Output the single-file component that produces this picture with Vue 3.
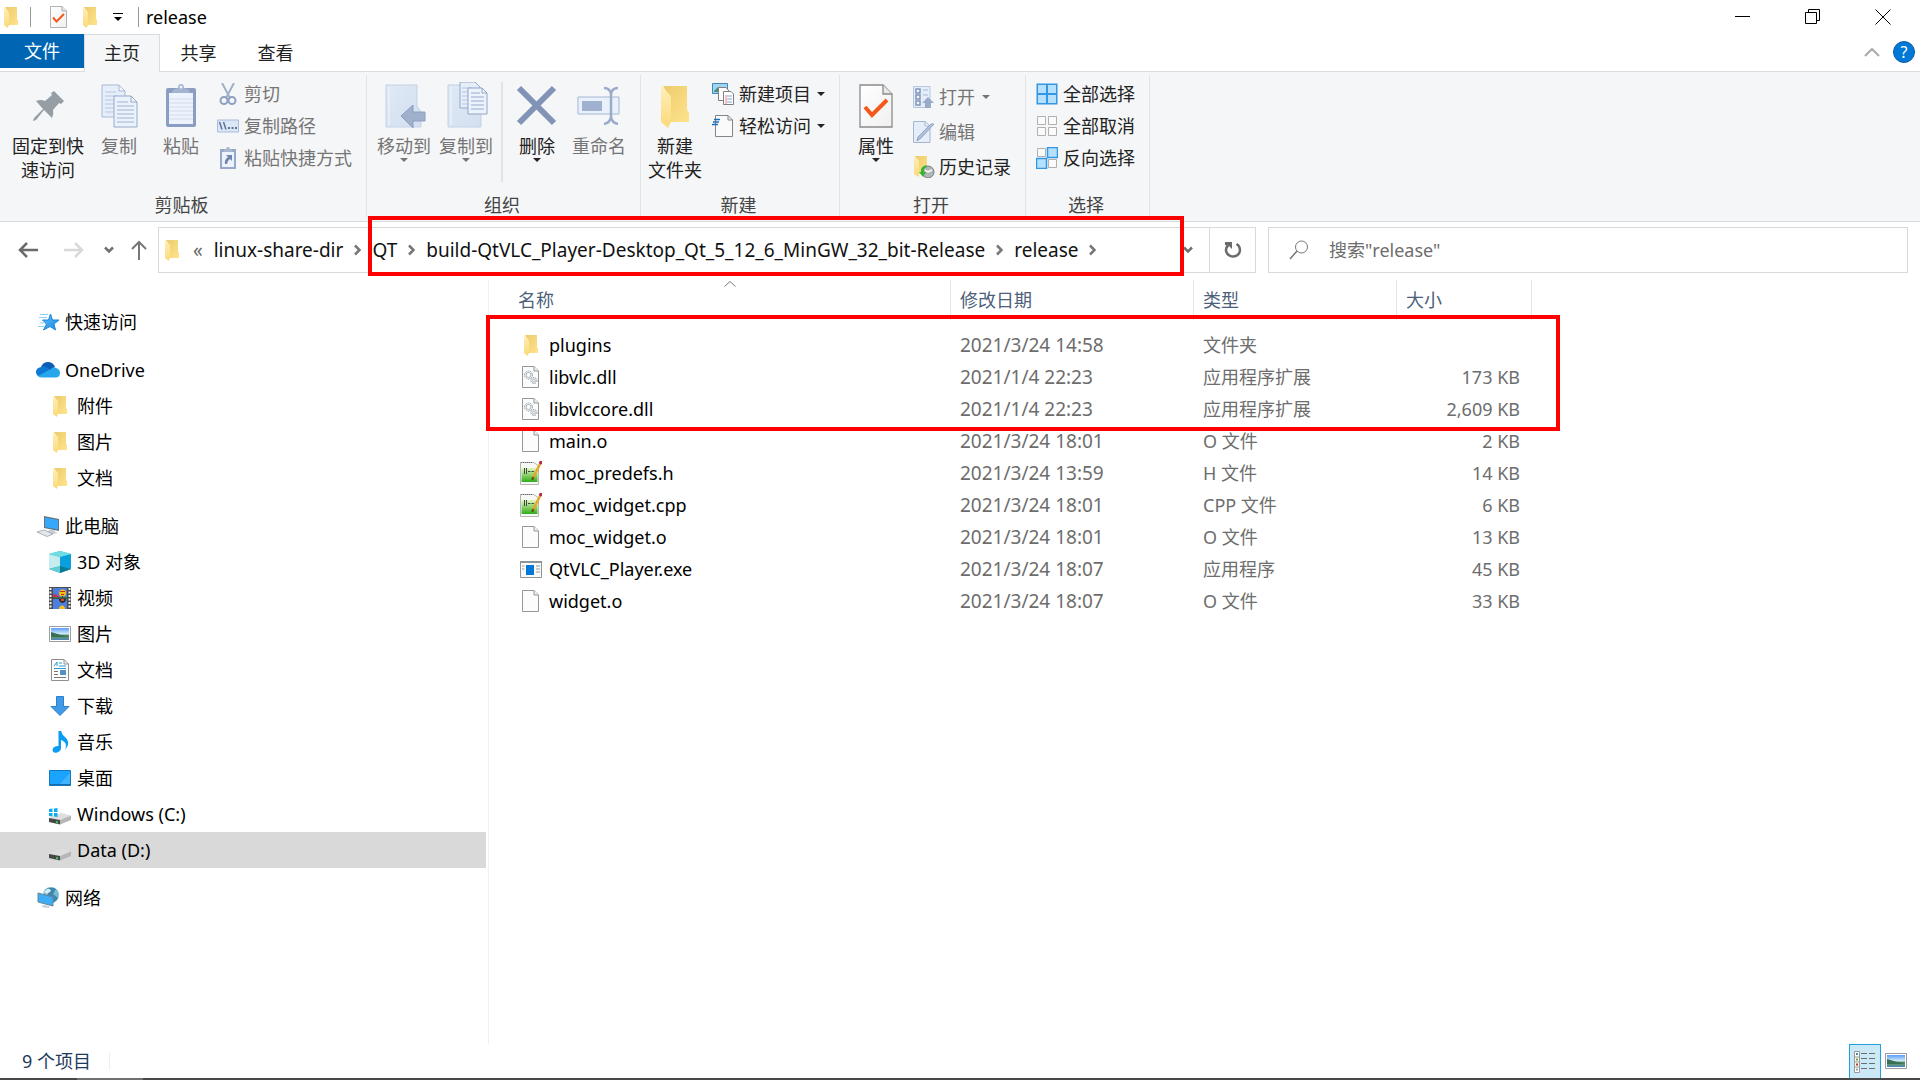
<script setup>
import { ref } from 'vue'

const tabs = ['主页', '共享', '查看']
const activeTab = ref('主页')

const clipboardSmall = [
  { icon: 'cut', text: '剪切' },
  { icon: 'copypath', text: '复制路径' },
  { icon: 'shortcut', text: '粘贴快捷方式' },
]
const selectSmall = [
  { icon: 'selall', text: '全部选择' },
  { icon: 'selnone', text: '全部取消' },
  { icon: 'selinv', text: '反向选择' },
]

const tree = [
  [{ icon: 'star', text: '快速访问' }],
  [
    { icon: 'cloud', text: 'OneDrive' },
    { icon: 'folder', text: '附件', child: true },
    { icon: 'folder', text: '图片', child: true },
    { icon: 'folder', text: '文档', child: true },
  ],
  [
    { icon: 'pc', text: '此电脑' },
    { icon: 'cube', text: '3D 对象', child: true },
    { icon: 'video', text: '视频', child: true },
    { icon: 'picture', text: '图片', child: true },
    { icon: 'doc', text: '文档', child: true },
    { icon: 'download', text: '下载', child: true },
    { icon: 'music', text: '音乐', child: true },
    { icon: 'desktop', text: '桌面', child: true },
    { icon: 'windrive', text: 'Windows (C:)', child: true },
    { icon: 'drive', text: 'Data (D:)', child: true, selected: true },
  ],
  [{ icon: 'network', text: '网络' }],
]

const crumbs = ['linux-share-dir', 'QT', 'build-QtVLC_Player-Desktop_Qt_5_12_6_MinGW_32_bit-Release', 'release']

const files = [
  { icon: 'folder', name: 'plugins', date: '2021/3/24 14:58', type: '文件夹', size: '' },
  { icon: 'dll', name: 'libvlc.dll', date: '2021/1/4 22:23', type: '应用程序扩展', size: '173 KB' },
  { icon: 'dll', name: 'libvlccore.dll', date: '2021/1/4 22:23', type: '应用程序扩展', size: '2,609 KB' },
  { icon: 'blank', name: 'main.o', date: '2021/3/24 18:01', type: 'O 文件', size: '2 KB' },
  { icon: 'npp', name: 'moc_predefs.h', date: '2021/3/24 13:59', type: 'H 文件', size: '14 KB' },
  { icon: 'npp', name: 'moc_widget.cpp', date: '2021/3/24 18:01', type: 'CPP 文件', size: '6 KB' },
  { icon: 'blank', name: 'moc_widget.o', date: '2021/3/24 18:01', type: 'O 文件', size: '13 KB' },
  { icon: 'exe', name: 'QtVLC_Player.exe', date: '2021/3/24 18:07', type: '应用程序', size: '45 KB' },
  { icon: 'blank', name: 'widget.o', date: '2021/3/24 18:07', type: 'O 文件', size: '33 KB' },
]
</script>

<template>
  <div class="window">
    <svg class="defs" aria-hidden="true">
      <defs>
        <linearGradient id="gFold" x1="0" y1="0" x2="1" y2="1"><stop offset="0" stop-color="#eccb6c" /><stop offset="1" stop-color="#ffe38c" /></linearGradient>
        <linearGradient id="gLeaf" x1="0" y1="0" x2="0" y2="1"><stop offset="0" stop-color="#ffefb8" /><stop offset="1" stop-color="#fbd978" /></linearGradient>
        <linearGradient id="gPale" x1="0" y1="0" x2="1" y2="1"><stop offset="0" stop-color="#dfe9f6" /><stop offset="1" stop-color="#d3dff0" /></linearGradient>
        <linearGradient id="gPage" x1="0" y1="0" x2="1" y2="1"><stop offset="0" stop-color="#ffffff" /><stop offset="1" stop-color="#f0f0f0" /></linearGradient>
        <linearGradient id="gBlue" x1="0" y1="0" x2="1" y2="1"><stop offset="0" stop-color="#5fc0ff" /><stop offset="1" stop-color="#1488e0" /></linearGradient>
        <linearGradient id="gGreen" x1="0" y1="0" x2="0" y2="1"><stop offset="0" stop-color="#e4f5c4" /><stop offset="1" stop-color="#2fae18" /></linearGradient>
        <linearGradient id="gSky" x1="0" y1="0" x2="0" y2="1"><stop offset="0" stop-color="#5a9df5" /><stop offset=".5" stop-color="#d5ecf8" /><stop offset=".6" stop-color="#4f8560" /><stop offset=".8" stop-color="#5f9478" /><stop offset="1" stop-color="#4c83c8" /></linearGradient>
      </defs>
      <symbol id="folder" viewBox="0 0 14 21">
        <path d="M1 0H13V12L14 13V18H4V5z" fill="url(#gFold)" />
        <path d="M0 0L4 4Q5 5 5 6V18L3.500 21L0 18z" fill="url(#gLeaf)" />
      </symbol>
      <symbol id="props" viewBox="0 0 34 44">
        <path d="M1 1H24L33 10V43H1z" fill="url(#gPage)" stroke="#8b8b8b" stroke-width="1.300" />
        <path d="M24 1V10H33" fill="#e8e8e8" stroke="#8b8b8b" stroke-width="1.300" />
        <path d="M6 23L13 31L28 16" fill="none" stroke="#f4581a" stroke-width="4" />
      </symbol>
      <symbol id="pin" viewBox="0 0 48 48">
        <path d="M30 9L40 19L37 22L35 21L29 28Q30 32 28 36L20 28L12 38L9 39L10 36L19 27L12 19Q17 17 21 19L28 13L27 11z" fill="#949ea4" />
      </symbol>
      <symbol id="copy" viewBox="0 0 48 48">
        <path d="M7 3H24L30 9V35H7zM24 3V9H30" fill="#e6eefa" stroke="#a7b9d6" />
        <path d="M10 10H21M10 14H22M10 18H20M10 22H20M10 26H20M10 30H18" stroke="#b9c8df" />
        <path d="M19 14H36L42 20V45H19zM36 14V20H42" fill="#ecf2fc" stroke="#94a8ca" />
        <path d="M22 20H33M22 24H39M22 28H39M22 32H39M22 36H39M22 40H39" stroke="#9fb1cf" />
      </symbol>
      <symbol id="paste" viewBox="0 0 48 48">
        <rect x="9" y="6" width="30" height="39" rx="2" fill="#8b9dc1" />
        <path d="M12 11H36V42H12z" fill="#edf3fc" />
        <path d="M12 17H36M12 21H36M12 25H36M12 29H36M12 33H36M12 37H36" stroke="#d0dcec" />
        <path d="M15 11Q15 7 21 6Q21 2 24 2T27 6Q33 7 33 11z" fill="#a4b3cf" />
        <circle cx="24" cy="5" r="1.500" fill="#edf3fc" />
      </symbol>
      <symbol id="moveto" viewBox="0 0 48 48">
        <path d="M6 3H37V24L41 30V45H6z" fill="url(#gPale)" stroke="#c3d2e8" /><path d="M9 5V43" stroke="#f1f5fb" />
        <path d="M21 34L33 23V30H45V39H33V46z" fill="#9fb0cd" stroke="#8d9fc0" />
      </symbol>
      <symbol id="copyto" viewBox="0 0 48 48">
        <path d="M6 3H35V28L39 33V45H6z" fill="url(#gPale)" stroke="#c3d2e8" /><path d="M9 5V43" stroke="#f1f5fb" />
        <path d="M18 0H33L38 5V26H18z" fill="#e6eefa" stroke="#94a8ca" /><path d="M20 6H30M20 10H28M20 14H26M20 18H26M20 22H26" stroke="#b5c4dc" />
        <path d="M26 6H40L45 11V32H26zM40 6V11H45" fill="#edf3fc" stroke="#8fa3c6" /><path d="M29 11H38M29 15H42M29 19H42M29 23H42M29 27H42" stroke="#94a8ca" />
      </symbol>
      <symbol id="del" viewBox="0 0 48 48"><path d="M6 6L41 41M41 6L6 41" stroke="#8194b7" stroke-width="6" /></symbol>
      <symbol id="rename" viewBox="0 0 48 48">
        <path d="M3 15H44V32H3z" fill="#e9f1fd" stroke="#a5b6d3" /><path d="M7 19H27V29H7z" fill="#a0b1cf" />
        <path d="M29 6Q35 6 36 12V35Q35 41 29 42M43 6Q37 6 36 12M36 35Q37 41 43 42" fill="none" stroke="#9aabc9" stroke-width="2.500" />
      </symbol>
      <symbol id="cut" viewBox="0 0 22 22">
        <path d="M5 0L13 15M17 0L9 15" stroke="#a2b0c9" stroke-width="2" />
        <circle cx="7" cy="17.500" r="3.500" fill="none" stroke="#8ea0c2" stroke-width="2" /><circle cx="15" cy="17.500" r="3.500" fill="none" stroke="#8ea0c2" stroke-width="2" />
      </symbol>
      <symbol id="copypath" viewBox="0 0 22 22">
        <path d="M.5 5H21.500V17H.5z" fill="#dbe7f7" stroke="#a9bcd9" />
        <path d="M2.500 7L5 14.500M6.500 7L9 14.500" stroke="#5f7396" stroke-width="1.500" /><path d="M11 13H13M14.500 13H16.500M18 13H20" stroke="#5f7396" stroke-width="2" />
      </symbol>
      <symbol id="shortcut" viewBox="0 0 22 22">
        <path d="M3 2H19V22H3z" fill="#96a9ca" /><path d="M5 5H17V20H5z" fill="#edf3fc" />
        <path d="M6 5Q7 2 9 2Q9 0 11 0T13 2Q15 2 16 5z" fill="#a9b7d1" />
        <path d="M9 8H15V14L13 12Q10 14 10 17H8Q7 13 11 10z" fill="#7186ad" />
      </symbol>
      <symbol id="newitem" viewBox="0 0 22 22">
        <path d="M.5 .5H15.500V10.500H.5z" fill="#9fd5f1" stroke="#3f88b4" /><path d="M2 8L6 4L9 9H2z" fill="#4a8f80" />
        <path d="M6.500 4.500H14L17 8V17.500H6.500z" fill="#fff" stroke="#808080" />
        <path d="M11.500 8.500H19L21.500 11V21.500H11.500z" fill="#fff" stroke="#808080" /><path d="M14 12V21" stroke="#f08080" /><path d="M15 13H20M15 16H20M15 19H20" stroke="#7aa5dc" />
      </symbol>
      <symbol id="easy" viewBox="0 0 22 22">
        <path d="M3.500 .5H16L20.500 5V21.500H3.500zM16 .5V5H20.500" fill="#fafafa" stroke="#858585" />
        <path d="M2 4.500H8M1 7H7M0 9.500H6" stroke="#1c6fb9" stroke-width="1.500" />
      </symbol>
      <symbol id="open" viewBox="0 0 22 22">
        <path d="M.5 .5H17V21.500H.5z" fill="#e4edf9" stroke="#b7c6de" />
        <path d="M3 3H7V7H3zM3 9H7V13H3zM3 15H7V19H3z" fill="#f2f7fe" stroke="#8195ba" stroke-width="1.500" /><path d="M10 4H15M10 9H15" stroke="#a8b8d3" />
        <path d="M15 11L21 17H18V22H12V17H9z" fill="#9aabca" />
      </symbol>
      <symbol id="edit" viewBox="0 0 22 22">
        <path d="M.5 .5H12L17 5V21.500H.5zM12 .5V5H17" fill="#e4edf9" stroke="#a5b6d2" /><path d="M21 3L8 17L4 20L5 16L18 3z" fill="#b4c2da" stroke="#8fa2c4" />
      </symbol>
      <symbol id="history" viewBox="0 0 22 22">
        <path d="M2 0H14V12L15 18H5V5z" fill="url(#gFold)" /><path d="M1 0L6 5V21L1 18z" fill="url(#gLeaf)" />
        <circle cx="15" cy="16" r="6" fill="#b0b5b7" stroke="#777d7f" /><path d="M12 14L15 16L19 14" fill="none" stroke="#fff" stroke-width="1.500" />
        <path d="M13 9Q7 11 8 16L6 16L10 21L13 16H11Q10 12 14 11z" fill="#35b52e" />
      </symbol>
      <symbol id="selall" viewBox="0 0 22 22">
        <path d="M.5 .5H21.500V21.500H.5z" fill="#3397e2" /><path d="M2 2H10V10H2zM12 2H20V10H12zM2 12H10V20H2zM12 12H20V20H12z" fill="#b5e0ff" />
      </symbol>
      <symbol id="selnone" viewBox="0 0 22 22"><path d="M1.500 1.500H9.500V9.500H1.500zM12.500 1.500H20.500V9.500H12.500zM1.500 12.500H9.500V20.500H1.500zM12.500 12.500H20.500V20.500H12.500z" fill="#fbfbfb" stroke="#b0b0b0" /></symbol>
      <symbol id="selinv" viewBox="0 0 22 22">
        <path d="M1.500 1.500H9.500V9.500H1.500zM12.500 12.500H20.500V20.500H12.500z" fill="#fbfbfb" stroke="#b0b0b0" /><path d="M11.500 .5H21.500V10.500H11.500zM.5 11.500H10.500V21.500H.5z" fill="#b5e0ff" stroke="#3397e2" stroke-width="1.500" />
      </symbol>
      <symbol id="star" viewBox="0 0 24 24">
        <path d="M14.500 4L16.500 10H23L18 14L19.500 20L14 16.500L7.500 20L10.500 14L6.500 10H12.500z" fill="url(#gBlue)" stroke="#1d86d6" /><path d="M4 4.500H12M3 7.500H11M2 16.500H8M4 13H8" stroke="#8ccdf8" />
      </symbol>
      <symbol id="cloud" viewBox="0 0 24 24">
        <path d="M5 9Q7 4 12 4Q17 4 19 9L12 14z" fill="#0a5eb5" /><path d="M4.500 19Q0 18 0 14Q0 10 5 9Q8 7 12 10L18 14L9 19z" fill="#0f78d4" />
        <path d="M15 11Q17 8 20 10Q24 11 24 15Q24 19.500 19 19.500H6Q3 19.500 2 18z" fill="#28a8ea" />
      </symbol>
      <symbol id="pc" viewBox="0 0 24 24">
        <path d="M8 2L23 5V17L8 14z" fill="#65727d" /><path d="M9 3.500L22 6V15.500L9 13z" fill="#35a8fa" /><path d="M14 15.500L19 16.500V18L22 19L17 20L11 18z" fill="#c7ccd1" /><path d="M1 18L8 16L17 20L11 22.500z" fill="#e5e8ec" stroke="#a9b1b9" />
      </symbol>
      <symbol id="cube" viewBox="0 0 22 22">
        <path d="M11 0L22 3V18L11 22L0 18V3z" fill="#19b5d0" /><path d="M0 3L11 6V15L0 18z" fill="#c5ecee" /><path d="M22 3L11 6V15L22 18z" fill="#0aa0dc" /><path d="M0 3L11 0L22 3L11 6z" fill="#6fdde3" /><path d="M0 18L11 15V22z" fill="#65ccd5" /><path d="M22 18L11 15V22z" fill="#087a97" />
      </symbol>
      <symbol id="video" viewBox="0 0 22 22">
        <path d="M0 0H22V22H0z" fill="#4b4b4b" /><path d="M4 1H18V11H4zM4 12H18V22H4z" fill="#4a7fe0" />
        <path d="M1.500 1V22M20.500 1V22" stroke="#f4f4f4" stroke-width="2" stroke-dasharray="2 1.500" />
        <path d="M4 8Q6 6 8 8L11 10V11H4z" fill="#cf2a69" /><path d="M4 10H18V11H4z" fill="#2f7a34" />
        <circle cx="13.500" cy="6" r="3.500" fill="#f4bf17" /><path d="M11 4H16V5H11zM12 7H15V8H12z" fill="#cc281a" /><path d="M13 9H14V11H13z" fill="#333" />
        <path d="M10 12H17Q17 15 13.500 16Q10 15 10 12z" fill="#2b2b2b" /><path d="M12 12H15V14H12z" fill="#e2452a" /><path d="M10 22Q10 18.500 13 18.500T16 22z" fill="#f4bf17" />
      </symbol>
      <symbol id="picture" viewBox="0 0 22 22"><path d="M.5 3.500H21.500V18.500H.5z" fill="#fff" stroke="#9b9b9b" /><path d="M2 5H20V17H2z" fill="url(#gSky)" /><path d="M2 9L12 12L20 14H2z" fill="#396f56" /></symbol>
      <symbol id="doc" viewBox="0 0 22 22">
        <path d="M2.500 .5H15L19.500 5V21.500H2.500zM15 .5V5H19.500" fill="#fff" stroke="#8e8e8e" /><path d="M5 7L8 3V7M10 4H13M10 7H17M5 9.500H17" fill="none" stroke="#269ad2" /><path d="M5 12.500H9M5 15.500H9M5 18.500H17" stroke="#777" /><path d="M11 11H17V16H11z" fill="#5291c5" />
      </symbol>
      <symbol id="download" viewBox="0 0 22 22"><path d="M7.500 1.500H14.500V11.500H20L11 20.500L2 11.500H7.500z" fill="#3f9be8" stroke="#2c80cc" /></symbol>
      <symbol id="music" viewBox="0 0 22 22"><path d="M9.500 0H12Q13 4 17 7Q22 12 16 19Q19 11 12 9V17Q12 20 8 21.500Q4 22.500 3.500 19Q4 15 9.500 15z" fill="#089cf2" /></symbol>
      <symbol id="desktop" viewBox="0 0 22 22"><path d="M.5 3.500H21.500V18.500H.5z" fill="#1ba4ff" stroke="#1477be" /><path d="M11 17L21 6V17z" fill="#41b3ff" /><path d="M1 17.500H21" stroke="#166cab" /></symbol>
      <symbol id="drive" viewBox="0 0 22 22">
        <path d="M0 15L12 10L22 12.500L11 17z" fill="#dedede" /><path d="M0 15L11 17V21.500L0 19z" fill="#474747" /><path d="M11 17L22 12.500V17L11 21.500z" fill="#b6b6b6" /><path d="M7 18L9 18.500V20.500L7 20z" fill="#39d353" />
      </symbol>
      <symbol id="windrive" viewBox="0 0 22 22">
        <use href="#drive" /><path d="M0 6L3.500 5.500V9H0zM5 5.500L8.500 5V9H5zM0 10H3.500V13.500L0 13zM5 10H8.500V14L5 13.500z" fill="#10aef0" />
      </symbol>
      <symbol id="network" viewBox="0 0 24 24">
        <circle cx="15" cy="9" r="8" fill="#78b9d5" /><path d="M9 4Q14 0 20 3L17 8L22 12Q19 17 14 17L12 9z" fill="#3c88aa" /><path d="M11 3Q14 2 15 5L11 8L8 6z" fill="#d9edf5" />
        <path d="M2 7L17 11V20L2 16z" fill="#3caef7" stroke="#6d8291" /><path d="M7 19L13 20V22L6 21z" fill="#c4ccd2" />
      </symbol>
      <symbol id="blank" viewBox="0 0 22 22"><path d="M2.500 .5H14L18.500 5V21.500H2.500z" fill="#fcfcfc" stroke="#979797" /><path d="M14 .5V5H18.500" fill="#f1f1f1" stroke="#979797" /></symbol>
      <symbol id="dll" viewBox="0 0 22 22">
        <use href="#blank" /><circle cx="8.500" cy="9" r="2.500" fill="none" stroke="#a3b0b9" /><circle cx="8.500" cy="9" r="4" fill="none" stroke="#8696a2" stroke-dasharray="1.500 1" />
        <circle cx="14" cy="14.500" r="1.500" fill="none" stroke="#a3b0b9" /><circle cx="14" cy="14.500" r="3" fill="none" stroke="#8696a2" stroke-dasharray="1.500 1" />
      </symbol>
      <symbol id="npp" viewBox="0 0 22 24">
        <path d="M.5 1.500H14L18.500 5V23.500H.5z" fill="#f5f8f3" stroke="#b5b5b5" /><path d="M1 1.500H13" stroke="#666" stroke-dasharray="1 1" /><path d="M1.500 7H17.500V21H1.500z" fill="url(#gGreen)" />
        <path d="M4.500 7V13M6.500 7V13M8 10.500H10.500M11.500 10.500H14" stroke="#3c4e3a" /><path d="M20 3L13 17" stroke="#e9a624" stroke-width="2.500" /><path d="M21.500 0L20 3" stroke="#b32537" stroke-width="3" /><path d="M13.500 16L12 19" stroke="#6f4a16" stroke-width="2" />
      </symbol>
      <symbol id="exe" viewBox="0 0 22 22"><path d="M.5 3.500H21.500V19.500H.5z" fill="#fafafa" stroke="#8d9599" /><path d="M0 3H22V5H0z" fill="#8d9599" /><path d="M6 7H14V17H6z" fill="#0078d7" /><path d="M2 8H4.500M2 11H4.500M16 8H20M16 11H20M16 14H20" stroke="#999" /></symbol>
      <symbol id="sep" viewBox="0 0 8 12"><path d="M2 1.500L6.500 6L2 10.500" fill="none" stroke="#777" stroke-width="2.500" /></symbol>
      <symbol id="down" viewBox="0 0 10 8"><path d="M1 1.500L5 5.500L9 1.500" fill="none" stroke="#707070" stroke-width="2.500" /></symbol>
      <symbol id="tri" viewBox="0 0 8 4"><path d="M0 0H8L4 4z" fill="currentColor" /></symbol>
      <symbol id="details" viewBox="0 0 22 22"><path d="M.5 .5H5.500V21.500H.5zM1 6H5M1 11H5M1 16H5" fill="#fff" stroke="#999" /><path d="M2 2H4V4H2z" fill="#4191a6" /><path d="M2 7.500H4V9.500H2z" fill="#7b9b42" /><path d="M2 12.500H4V14.500H2z" fill="#b04022" /><path d="M2 17.500H4V19.500H2z" fill="#99a5a8" /><path d="M7 2.500H13M15 2.500H21M7 7.500H13M15 7.500H21M7 12.500H13M15 12.500H21M7 17.500H13M15 17.500H21" stroke="#6e6e6e" /></symbol>
    </svg>

    <header class="titlebar">
      <svg class="fold"><use href="#folder" /></svg>
      <i class="vsep"></i>
      <button class="quick" aria-label="属性"><svg class="qprops"><use href="#props" /></svg></button>
      <button class="quick" aria-label="新建文件夹"><svg class="fold"><use href="#folder" /></svg></button>
      <button class="quick custom" aria-label="自定义快速访问工具栏"><svg width="10" height="10"><path d="M0 1.500H10" stroke="#000" /><path d="M1 5H9L5 9z" /></svg></button>
      <i class="vsep"></i>
      <h1>release</h1>
      <div class="winbtns">
        <button aria-label="最小化"><svg width="16" height="16"><path d="M0 7.500H15" stroke="#000" /></svg></button>
        <button aria-label="还原"><svg width="16" height="16"><path d="M.5 3.500H11.500V14.500H.5zM3.500 3V.5H14.500V11.500H12" fill="none" stroke="#000" /></svg></button>
        <button aria-label="关闭"><svg width="16" height="16"><path d="M.5 .5L15.500 15.500M15.500 .5L.5 15.500" stroke="#000" /></svg></button>
      </div>
    </header>

    <nav class="tabs">
      <button class="file">文件</button>
      <button v-for="t in tabs" :key="t" class="tab" :class="{ active: t === activeTab }" @click="activeTab = t">{{ t }}</button>
      <div class="tabright">
        <button aria-label="折叠功能区"><svg width="16" height="10"><path d="M1 9L8 2L15 9" fill="none" stroke="#aaa" stroke-width="2" /></svg></button>
        <button class="help" aria-label="帮助">?</button>
      </div>
    </nav>

    <section class="ribbon">
      <div class="group g1">
        <div class="body">
          <button class="big w84"><svg><use href="#pin" /></svg>固定到快<br />速访问</button>
          <button class="big w58 off"><svg><use href="#copy" /></svg>复制</button>
          <button class="big w66 off"><svg><use href="#paste" /></svg>粘贴</button>
          <div class="smalls">
            <button v-for="b in clipboardSmall" :key="b.text" class="small off"><svg class="ic"><use :href="'#' + b.icon" /></svg>{{ b.text }}</button>
          </div>
        </div>
        <p>剪贴板</p>
      </div>
      <div class="group g2">
        <div class="body">
          <button class="big w62 off"><svg><use href="#moveto" /></svg>移动到<svg class="tri"><use href="#tri" /></svg></button>
          <button class="big w62 off"><svg><use href="#copyto" /></svg>复制到<svg class="tri"><use href="#tri" /></svg></button>
          <i class="inner"></i>
          <button class="big w62"><svg><use href="#del" /></svg>删除<svg class="tri"><use href="#tri" /></svg></button>
          <button class="big w62 off"><svg><use href="#rename" /></svg>重命名</button>
        </div>
        <p>组织</p>
      </div>
      <div class="group g3">
        <div class="body">
          <button class="big w68"><svg class="bigfold"><use href="#folder" /></svg>新建<br />文件夹</button>
          <div class="smalls">
            <button class="small"><svg class="ic"><use href="#newitem" /></svg>新建项目<svg class="tri"><use href="#tri" /></svg></button>
            <button class="small"><svg class="ic"><use href="#easy" /></svg>轻松访问<svg class="tri"><use href="#tri" /></svg></button>
          </div>
        </div>
        <p>新建</p>
      </div>
      <div class="group g4">
        <div class="body">
          <button class="big w68"><svg class="bigprops"><use href="#props" /></svg>属性<svg class="tri"><use href="#tri" /></svg></button>
          <div class="smalls tall">
            <button class="small off"><svg class="ic"><use href="#open" /></svg>打开<svg class="tri"><use href="#tri" /></svg></button>
            <button class="small off"><svg class="ic"><use href="#edit" /></svg>编辑</button>
            <button class="small"><svg class="ic"><use href="#history" /></svg>历史记录</button>
          </div>
        </div>
        <p>打开</p>
      </div>
      <div class="group g5">
        <div class="body">
          <div class="smalls">
            <button v-for="b in selectSmall" :key="b.text" class="small"><svg class="ic"><use :href="'#' + b.icon" /></svg>{{ b.text }}</button>
          </div>
        </div>
        <p>选择</p>
      </div>
    </section>

    <section class="addressrow">
      <div class="navbtns">
        <button aria-label="后退"><svg width="20" height="18"><path d="M9 2L2 9L9 16M2 9H20" fill="none" stroke="#6b6b6b" stroke-width="2.500" /></svg></button>
        <button aria-label="前进"><svg width="20" height="18"><path d="M11 2L18 9L11 16M18 9H0" fill="none" stroke="#d9d9d9" stroke-width="2.500" /></svg></button>
        <button aria-label="最近浏览的位置"><svg width="10" height="8"><use href="#down" /></svg></button>
        <button aria-label="上移"><svg width="16" height="20"><path d="M1 9L8 2L15 9M8 2V20" fill="none" stroke="#777" stroke-width="2" /></svg></button>
      </div>
      <div class="address">
        <svg class="fold"><use href="#folder" /></svg>
        <span class="more">«</span>
        <template v-for="c in crumbs" :key="c">
          <a href="#">{{ c }}</a><svg class="sepic"><use href="#sep" /></svg>
        </template>
        <button class="drop" aria-label="以前的位置"><svg width="10" height="8"><use href="#down" /></svg></button>
        <button class="refresh" aria-label="刷新"><svg width="18" height="18"><path d="M12.500 3Q16 5 16 9.500A7 6.500 0 1 1 4 4.500" fill="none" stroke="#6b6b6b" stroke-width="2.500" /><path d="M1 1H8V8L5.500 5.500L1 4z" fill="#6b6b6b" /></svg></button>
        <div class="mark mark-path"></div>
      </div>
      <div class="search">
        <svg width="20" height="20"><circle cx="12.500" cy="7" r="6" fill="none" stroke="#777" /><path d="M8 11L1 19" stroke="#777" stroke-width="1.500" /></svg>
        <input type="text" aria-label="搜索" placeholder="搜索&quot;release&quot;" />
      </div>
    </section>

    <main>
      <aside>
        <ul v-for="(g, i) in tree" :key="i">
          <li v-for="n in g" :key="n.text" :class="{ child: n.child, selected: n.selected }">
            <a href="#"><span class="nic"><svg :class="n.icon === 'folder' ? 'fold' : n.child ? 'ic' : 'ic24'"><use :href="'#' + n.icon" /></svg></span>{{ n.text }}</a>
          </li>
        </ul>
      </aside>
      <section class="files">
        <table>
          <colgroup><col class="c1" /><col class="c2" /><col class="c3" /><col class="c4" /></colgroup>
          <thead>
            <tr>
              <th><div>名称<svg class="sort" width="12" height="6"><path d="M.5 5.500L6 .5L11.500 5.500" fill="none" stroke="#777" /></svg></div></th>
              <th><div>修改日期</div></th>
              <th><div>类型</div></th>
              <th><div>大小</div></th>
            </tr>
          </thead>
          <tbody>
            <tr v-for="f in files" :key="f.name">
              <td class="name"><div><span class="fic"><svg :class="f.icon === 'folder' ? 'fold' : f.icon === 'npp' ? 'ic npp' : 'ic'"><use :href="'#' + f.icon" /></svg></span>{{ f.name }}</div></td>
              <td class="date">{{ f.date }}</td>
              <td>{{ f.type }}</td>
              <td class="size">{{ f.size }}</td>
            </tr>
          </tbody>
        </table>
        <div class="mark mark-files"></div>
      </section>
    </main>

    <footer>
      <span class="count">9 个项目</span>
      <div class="views">
        <button class="on" aria-label="详细信息"><svg class="ic"><use href="#details" /></svg></button>
        <button aria-label="大图标"><svg class="ic"><use href="#picture" /></svg></button>
      </div>
    </footer>
    <div class="edge"><i></i></div>
  </div>
</template>

<style>
body { margin: 0; background: #fff; }
</style>

<style scoped>
* { box-sizing: border-box; }
.window { display: flex; flex-direction: column; min-height: 100vh; font: 18px/24px "Noto Sans", "Noto Sans CJK SC", sans-serif; color: #000; background: #fff; }
.defs { position: absolute; width: 0; height: 0; }
button { font: inherit; color: inherit; background: none; border: 0; padding: 0; margin: 0; }
a { color: inherit; text-decoration: none; }
svg { display: block; flex: none; }
p, h1, ul { margin: 0; padding: 0; }
.fold { width: 14px; height: 21px; }
.ic { width: 22px; height: 22px; }
.ic24 { width: 24px; height: 24px; }
.npp { height: 24px; }
.tri { width: 8px; height: 4px; }

.titlebar { display: flex; align-items: center; height: 34px; padding-left: 4px; }
.vsep { width: 1px; height: 20px; margin-left: 12px; background: #999; }
.quick { margin-left: 16px; }
.vsep + .quick { margin-left: 19px; }
.qprops { width: 17px; height: 22px; }
.custom + .vsep { margin-left: 15px; }
h1 { margin-left: 7px; font-size: 18px; font-weight: 400; }
.winbtns { display: flex; margin-left: auto; padding-right: 2px; }
.winbtns button { display: flex; justify-content: center; width: 70px; }

.tabs { display: flex; height: 37px; color: #222; }
.file { width: 84px; height: 34px; background: #0066b4; color: #fff; }
.tab { width: 77px; height: 38px; padding-bottom: 2px; border: 1px solid transparent; border-bottom: 0; }
.tab.active { width: 76px; background: #f5f6f7; border-color: #dadbdc; position: relative; z-index: 1; }
.tabright { display: flex; align-items: center; gap: 13px; margin-left: auto; padding: 0 5px 2px 0; }
.help { width: 22px; height: 22px; border-radius: 50%; background: #0078d7; border: 1px solid #075fa9; color: #fff; font-size: 16px; line-height: 20px; }

.ribbon { display: flex; height: 151px; background: #f5f6f7; border-top: 1px solid #dadbdc; border-bottom: 1px solid #dadbdc; color: #222; }
.group { display: flex; flex-direction: column; position: relative; }
.group::after { content: ""; position: absolute; right: 0; top: 3px; bottom: 3px; width: 1px; background: #e2e3e4; }
.group p { padding-right: 4px; text-align: center; color: #444; }
.g1 { width: 367px; } .g2 { width: 274px; } .g3 { width: 199px; } .g4 { width: 186px; } .g5 { width: 124px; }
.body { display: flex; align-items: flex-start; height: 121px; }
.g1 .body, .g2 .body, .g5 .body { padding-left: 6px; }
.g4 .body { padding-left: 2px; }
.big { display: flex; flex-direction: column; align-items: center; padding-top: 10px; line-height: 24px; white-space: nowrap; }
.big > svg:first-child { width: 48px; height: 48px; margin-bottom: 4px; }
.big > .bigfold:first-child { width: 28px; height: 42px; margin: 4px 0 6px; }
.big > .bigprops:first-child { width: 34px; height: 44px; margin: 2px 0 6px; }
.w58 { width: 58px; } .w62 { width: 62px; } .w66 { width: 66px; } .w68 { width: 68px; } .w84 { width: 84px; }
.off { color: #757575; }
.smalls { display: flex; flex-direction: column; padding: 6px 0 0 3px; }
.g5 .smalls { padding-left: 4px; }
.smalls.tall { padding-top: 7px; }
.small { display: flex; align-items: center; gap: 5px; height: 32px; white-space: nowrap; }
.tall .small { height: 35px; gap: 4px; }
.small .tri { margin-left: 1px; }
.tall .tri { margin-left: 3px; }
.inner { width: 2px; height: 100px; margin: 10px 3px 0 4px; background: #e2e3e4; }

.addressrow { display: flex; padding: 5px 12px 7px 0; height: 58px; color: #111; }
.navbtns { display: flex; align-items: center; width: 158px; padding-left: 18px; }
.navbtns button + button { margin-left: 26px; }
.navbtns button:nth-child(3) { margin-left: 20px; }
.navbtns button:nth-child(4) { margin-left: 17px; }
.address { position: relative; display: flex; align-items: center; flex: 1090 1 0; min-width: 0; padding-left: 6px; border: 1px solid #d9d9d9; font-size: 19px; white-space: nowrap; }
.more { margin: 0 11px 0 14px; color: #666; }
.sepic { width: 8px; height: 12px; margin: 0 11px 0 10px; }
.drop { margin-left: auto; padding: 0 16px; }
.refresh { display: flex; align-items: center; justify-content: center; align-self: stretch; width: 46px; border-left: 1px solid #d9d9d9; }
.search { display: flex; align-items: center; flex: 618 1 0; min-width: 0; margin-left: 12px; padding-left: 20px; border: 1px solid #d9d9d9; }
.search input { flex: 1; min-width: 0; margin-left: 20px; padding: 0; border: 0; outline: 0; font: inherit; background: none; }
.search input::placeholder { color: #6d6d6d; opacity: 1; }
.mark { position: absolute; border: 4px solid #f00; pointer-events: none; }
.mark-path { left: 209px; right: 71px; top: -12px; height: 60px; z-index: 2; }

main { display: flex; flex: 1; }
aside { width: 488px; padding: 24px 2px 0 0; }
ul { list-style: none; margin-bottom: 12px; }
li a { display: flex; align-items: center; height: 36px; padding-left: 36px; }
li.child a { padding-left: 48px; }
.nic { display: flex; justify-content: center; width: 24px; margin-right: 5px; }
li.selected { background: #d9d9d9; }

.files { position: relative; flex: 1; border-left: 1px solid #f0f0f0; }
table { table-layout: fixed; width: 1043px; border-collapse: collapse; color: #6d6d6d; }
.c1 { width: 462px; } .c2 { width: 243px; } .c3 { width: 203px; } .c4 { width: 135px; }
th { padding: 0 0 9px; font-weight: 400; text-align: left; color: #4c607a; }
th div { position: relative; height: 40px; padding-left: 9px; line-height: 40px; border-right: 1px solid #e5e5e5; }
th:first-child div { padding-left: 29px; }
.sort { position: absolute; left: 235px; top: 1px; }
td { height: 32px; padding: 0 0 0 9px; white-space: nowrap; }
td.name { padding-left: 30px; color: #000; }
td.name div { display: flex; align-items: center; height: 32px; }
.fic { display: flex; justify-content: center; width: 24px; margin-right: 6px; }
.date { font-size: 19px; }
td.size { padding-right: 12px; text-align: right; }
.mark-files { left: -3px; width: 1074px; top: 35px; height: 116px; }

footer { display: flex; align-items: center; height: 34px; padding-right: 9px; color: #1e395b; }
.count { padding: 0 18px 0 22px; border-right: 1px solid #eee; line-height: 18px; }
.views { display: flex; align-self: stretch; margin-left: auto; }
.views button { display: flex; align-items: center; justify-content: center; width: 30px; }
.views .on { width: 32px; border: 1px solid #26a0da; border-bottom: 0; background: #cbe8f6; }
.edge { height: 2px; background: #48484b; }
.edge i { display: block; width: 66px; height: 2px; margin-left: 77px; background: #707073; }
</style>
